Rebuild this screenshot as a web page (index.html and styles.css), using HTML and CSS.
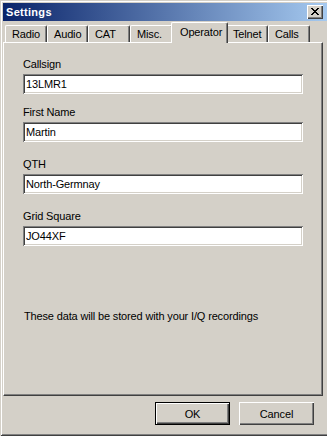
FILE: index.html
```html
<!DOCTYPE html>
<html lang="en">
<head>
<meta charset="utf-8">
<title>Settings</title>
<link rel="stylesheet" href="styles.css">
</head>
<body>
<div class="window">
  <div class="titlebar">
    <span class="title">Settings</span>
    <button class="close" aria-label="Close">
      <svg width="8" height="7" viewBox="0 0 8 7" shape-rendering="crispEdges">
        <path fill="#000" d="M0 0h2v1H0zM6 0h2v1H6zM1 1h2v1H1zM5 1h2v1H5zM2 2h4v1H2zM3 3h2v1H3zM2 4h4v1H2zM1 5h2v1H1zM5 5h2v1H5zM0 6h2v1H0zM6 6h2v1H6z"/>
      </svg>
    </button>
  </div>
  <div class="client">
    <div class="tabs">
      <div class="tab tab-radio">Radio</div>
      <div class="tab tab-audio">Audio</div>
      <div class="tab tab-cat">CAT</div>
      <div class="tab tab-misc">Misc.</div>
      <div class="tab tab-operator selected">Operator</div>
      <div class="tab tab-telnet">Telnet</div>
      <div class="tab tab-calls">Calls</div>
    </div>
    <div class="panel">
      <div class="field first">
        <label class="label" for="callsign">Callsign</label>
        <input class="input" id="callsign" type="text" value="13LMR1">
      </div>
      <div class="field">
        <label class="label" for="firstname">First Name</label>
        <input class="input" id="firstname" type="text" value="Martin">
      </div>
      <div class="field">
        <label class="label" for="qth">QTH</label>
        <input class="input" id="qth" type="text" value="North-Germnay">
      </div>
      <div class="field">
        <label class="label" for="grid">Grid Square</label>
        <input class="input" id="grid" type="text" value="JO44XF">
      </div>
      <p class="note">These data will be stored with your I/Q recordings</p>
    </div>
    <div class="buttons">
      <button class="btn default">OK</button>
      <button class="btn">Cancel</button>
    </div>
  </div>
</div>
</body>
</html>
```
FILE: styles.css
```css
html, body {
  margin: 0;
  padding: 0;
  width: 327px;
  height: 436px;
  overflow: hidden;
  background: #d4d0c8;
}

body {
  font-family: "Liberation Sans", Arial, sans-serif;
  font-size: 11px;
  line-height: 13px;
  letter-spacing: -0.15px;
  color: #000;
}

.window {
  box-sizing: border-box;
  width: 331px;
  height: 436px;
  padding: 3px;
  background: #d4d0c8;
  box-shadow:
    inset 1px 1px #d4d0c8,
    inset -1px -1px #404040,
    inset 2px 2px #ffffff,
    inset -2px -2px #808080;
  display: flex;
  flex-direction: column;
}

.titlebar {
  height: 18px;
  display: flex;
  align-items: center;
  justify-content: space-between;
  background: linear-gradient(to right, #0a246a 0%, #a6caf0 100%);
  padding: 0 5px 0 3px;
}

.title {
  color: #fff;
  font-weight: bold;
  letter-spacing: 0.3px;
  line-height: 18px;
}

.close {
  box-sizing: border-box;
  width: 16px;
  height: 14px;
  padding: 0;
  border: 0;
  background: #d4d0c8;
  box-shadow:
    inset 1px 1px #ffffff,
    inset -1px -1px #404040,
    inset -2px -2px #808080;
  display: flex;
  align-items: center;
  justify-content: center;
}

.close svg {
  display: block;
  margin: 0 1px 1px 0;
}

.client {
  display: flex;
  flex-direction: column;
}

.tabs {
  height: 21px;
  display: flex;
  align-items: flex-end;
  padding-left: 2px;
}

.tab {
  box-sizing: border-box;
  height: 17px;
  padding: 2px 0 0 6px;
  border-top: 1px solid #fff;
  border-left: 1px solid #fff;
  border-right: 1px solid #404040;
  border-radius: 2px 2px 0 0;
  box-shadow: inset -1px 0 #808080;
  white-space: nowrap;
}

.tab-radio { width: 42px; }
.tab-audio { width: 41px; }
.tab-cat { width: 42px; }
.tab-misc { width: 43px; }
.tab-operator { width: 53px; }
.tab-telnet { width: 42px; }
.tab-calls { width: 42px; }

.tab.selected {
  position: relative;
  z-index: 1;
  width: 57px;
  height: 21px;
  margin: 0 -2px -1px -2px;
  padding: 3px 0 0 8px;
  background: #d4d0c8;
}

.panel {
  box-sizing: border-box;
  width: 320px;
  height: 354px;
  padding: 15px 0 0 19px;
  border-top: 1px solid #fff;
  border-left: 1px solid #fff;
  border-right: 1px solid #404040;
  border-bottom: 1px solid #404040;
  box-shadow: inset -1px -1px #808080;
}

.field {
  display: flex;
  flex-direction: column;
  align-items: flex-start;
  margin-top: 16px;
}

.field.first {
  margin-top: 0;
}

.field:nth-child(2) {
  margin-top: 12px;
}

.label {
  display: block;
  height: 13px;
  margin-bottom: 3px;
}

.input {
  box-sizing: border-box;
  width: 280px;
  height: 20px;
  margin: 0;
  padding: 0 3px;
  border: 0;
  outline: none;
  background: #fff;
  font-family: "Liberation Sans", Arial, sans-serif;
  font-size: 11px;
  letter-spacing: -0.15px;
  color: #000;
  box-shadow:
    inset 1px 1px #808080,
    inset -1px -1px #ffffff,
    inset 2px 2px #404040,
    inset -2px -2px #d4d0c8;
}

.note {
  margin: 64px 0 0 1px;
}

.buttons {
  display: flex;
  justify-content: flex-end;
  gap: 9px;
  padding: 6px 14px 0 0;
}

.btn {
  box-sizing: border-box;
  width: 75px;
  height: 23px;
  margin: 0;
  padding: 0;
  border: 0;
  background: #d4d0c8;
  font-family: "Liberation Sans", Arial, sans-serif;
  font-size: 11px;
  letter-spacing: -0.15px;
  color: #000;
  box-shadow:
    inset 1px 1px #ffffff,
    inset -1px -1px #404040,
    inset -2px -2px #808080;
}

.btn.default {
  border: 1px solid #000;
}
```
